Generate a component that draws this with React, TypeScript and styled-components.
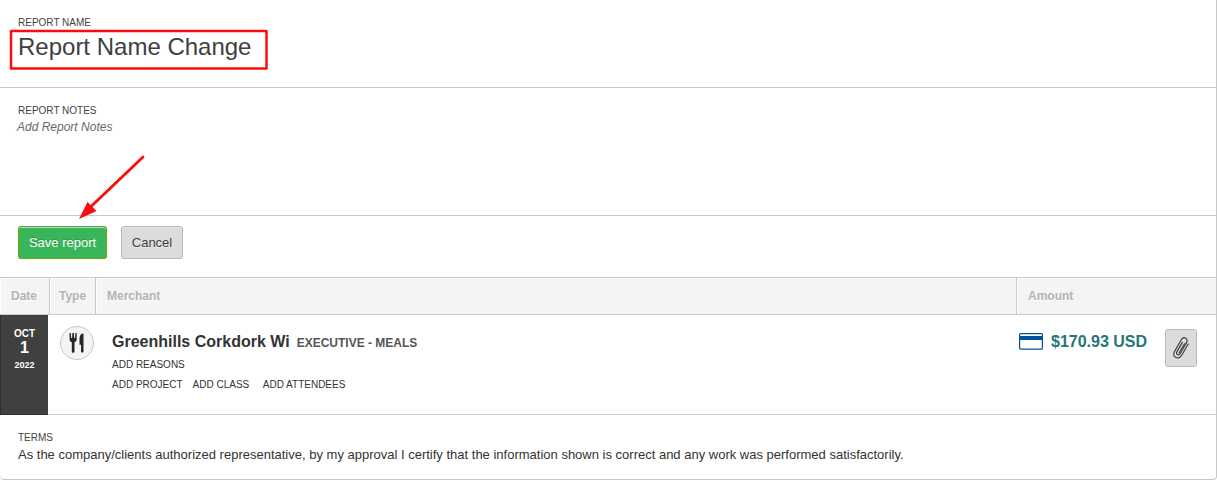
import React from "react";
import styled, { createGlobalStyle } from "styled-components";

const GlobalStyle = createGlobalStyle`
  *, *::before, *::after { box-sizing: border-box; }
  body {
    margin: 0;
    background: #fff;
    color: #333;
    font-family: "Liberation Sans", Arial, Helvetica, sans-serif;
  }
`;

const Report = styled.main`
  position: relative;
  height: 480px;
  border: 1px solid #c8c8c8;
  border-top: 0;
  border-left: 0;
  border-radius: 0 0 4px 4px;
  overflow: hidden;
  white-space: nowrap;
`;

const Section = styled.section<{ $height: number; $top: number }>`
  height: ${(p) => p.$height}px;
  padding: ${(p) => p.$top}px 18px 0;
  border-bottom: 1px solid #c8c8c8;
`;

const Label = styled.div`
  font-size: 10px;
  line-height: 12px;
  color: #444;
`;

const ReportName = styled.h1`
  margin: 4px 0 0;
  font-size: 24px;
  font-weight: 400;
  line-height: 28px;
  color: #404040;
`;

const NotesPlaceholder = styled.div`
  margin: 3px 0 0 -1px;
  font-size: 12px;
  font-style: italic;
  line-height: 14px;
  color: #6a6a6a;
`;

const Actions = styled.div`
  display: flex;
  gap: 14px;
  height: 62px;
  padding: 10px 18px 0;
  border-bottom: 1px solid #c8c8c8;
`;

const Button = styled.button<{ $primary?: boolean }>`
  width: ${(p) => (p.$primary ? 89 : 62)}px;
  height: 33px;
  padding: 1px 0 0;
  border: 1px solid ${(p) => (p.$primary ? "#77a80a" : "#b8b8b8")};
  border-top-color: ${(p) => (p.$primary ? "#4aa848" : "#b8b8b8")};
  border-radius: 3px;
  background: ${(p) => (p.$primary ? "#39b55a" : "#dcdcdc")};
  box-shadow: inset 0 1px 0 ${(p) => (p.$primary ? "#b0e0bd" : "#e4e4e4")};
  color: ${(p) => (p.$primary ? "#fff" : "#404040")};
  font: 13px/16px "Liberation Sans", Arial, sans-serif;
  text-shadow: ${(p) => (p.$primary ? "0 -1px 0 rgba(0,0,0,.2)" : "0 1px 0 rgba(255,255,255,.4)")};
`;

const columns = "50px 46px 1fr 199px";

const TableHead = styled.div`
  display: grid;
  grid-template-columns: ${columns};
  height: 37px;
  border-bottom: 1px solid #c8c8c8;
`;

const HeadCell = styled.div<{ $inset: number }>`
  padding: 11px 0 0 ${(p) => p.$inset}px;
  border-right: 1px solid #c8c8c8;
  background: #f4f4f4;
  box-shadow: inset 1px 1px 0 #fff;
  color: #b3b3b3;
  font-size: 12px;
  font-weight: 700;
  line-height: 14px;
  text-shadow: 0 1px 0 #fff;
  &:last-child { border-right: 0; }
`;

const ExpenseRow = styled.div`
  display: flex;
  height: 100px;
  border-bottom: 1px solid #c8c8c8;
`;

const DateCell = styled.div`
  display: flex;
  flex-direction: column;
  align-items: center;
  width: 48px;
  height: 100px;
  padding-top: 13px;
  background: #404040;
  border-left: 1px solid #303030;
  border-bottom: 1px solid #303030;
  color: #fff;
  font-weight: 700;
`;

const Month = styled.span`
  font-size: 10px;
  line-height: 12px;
`;

const Day = styled.span`
  font-size: 16px;
  line-height: 16px;
`;

const Year = styled.span`
  margin-top: 4px;
  font-size: 9px;
  line-height: 10px;
`;

const TypeBadge = styled.div`
  display: flex;
  align-items: center;
  justify-content: center;
  width: 34px;
  height: 34px;
  margin: 11px 18px 0 12px;
  border: 1px solid #c8c8c8;
  border-radius: 50%;
  background: #f4f4f4;
`;

const Details = styled.div`
  flex: 1;
  padding-top: 18px;
`;

const MerchantLine = styled.div`
  display: flex;
  align-items: baseline;
  gap: 7px;
  height: 20px;
  line-height: 18px;
`;

const Merchant = styled.strong`
  font-size: 16px;
  color: #333;
`;

const Category = styled.strong`
  font-size: 12px;
  color: #555;
`;

const LinkRow = styled.div<{ $top: number }>`
  display: flex;
  margin-top: ${(p) => p.$top}px;
  font-size: 10px;
  line-height: 12px;
  color: #333;
`;

const AddLink = styled.span<{ $gap?: number }>`
  margin-right: ${(p) => p.$gap ?? 0}px;
`;

const AmountCell = styled.div`
  display: flex;
  width: 197px;
`;

const CardIcon = styled.svg`
  display: block;
  width: 24px;
  height: 17px;
  margin-top: 18px;
`;

const Amount = styled.strong`
  width: 96px;
  margin: 18px 18px 0 8px;
  font-size: 16px;
  line-height: 18px;
  color: #267579;
`;

const AttachButton = styled.button`
  display: flex;
  align-items: center;
  justify-content: center;
  width: 32px;
  height: 38px;
  margin-top: 14px;
  padding: 0;
  border: 1px solid #b8b8b8;
  border-radius: 3px;
  background: #dcdcdc;
`;

const Terms = styled.footer`
  padding: 17px 18px 0;
`;

const TermsText = styled.div`
  margin-top: 3px;
  font-size: 13px;
  line-height: 16px;
`;

const Annotation = styled.svg`
  position: absolute;
  top: 0;
  left: 0;
  pointer-events: none;
`;

export default function App() {
  return (
    <>
      <GlobalStyle />
      <Report>
        <Section $height={88} $top={17}>
          <Label>REPORT NAME</Label>
          <ReportName>Report Name Change</ReportName>
        </Section>
        <Section $height={128} $top={17}>
          <Label>REPORT NOTES</Label>
          <NotesPlaceholder>Add Report Notes</NotesPlaceholder>
        </Section>
        <Actions>
          <Button $primary>Save report</Button>
          <Button>Cancel</Button>
        </Actions>
        <TableHead>
          <HeadCell $inset={11}>Date</HeadCell>
          <HeadCell $inset={9}>Type</HeadCell>
          <HeadCell $inset={11}>Merchant</HeadCell>
          <HeadCell $inset={11}>Amount</HeadCell>
        </TableHead>
        <ExpenseRow>
          <DateCell>
            <Month>OCT</Month>
            <Day>1</Day>
            <Year>2022</Year>
          </DateCell>
          <TypeBadge>
            <svg width="16" height="20" viewBox="0 0 16 20" fill="#262626">
              <path d="M.6 0h1.300l.3 5h.9l.3-5h1.500l.3 5h.9l.3-5h1.300v6.200c0 1.700-.9 2.600-2.200 3v9.300c0 1.700-2.700 1.700-2.700 0V9.200C1.400 8.800.6 7.900.6 6.200z" />
              <path d="M14.500.4v18.100c0 1.500-2.500 1.500-2.500 0v-6.700h-1.500V5.500c0-3.300 1.600-5.100 4-5.100z" />
            </svg>
          </TypeBadge>
          <Details>
            <MerchantLine>
              <Merchant>Greenhills Corkdork Wi</Merchant>
              <Category>EXECUTIVE - MEALS</Category>
            </MerchantLine>
            <LinkRow $top={6}>
              <AddLink>ADD REASONS</AddLink>
            </LinkRow>
            <LinkRow $top={8}>
              <AddLink $gap={10}>ADD PROJECT</AddLink>
              <AddLink $gap={13.5}>ADD CLASS</AddLink>
              <AddLink>ADD ATTENDEES</AddLink>
            </LinkRow>
          </Details>
          <AmountCell>
            <CardIcon viewBox="0 0 24 17">
              <rect x=".6" y=".6" width="22.800" height="15.600" rx="1" fill="#fff" stroke="#00539b" strokeWidth="1.200" />
              <path d="M1 3h22v4H1z" fill="#00539b" />
            </CardIcon>
            <Amount>$170.93 USD</Amount>
            <AttachButton aria-label="Attach receipt">
              <svg width="16" height="22" viewBox="0 0 16 22" fill="none" stroke="#404040" strokeWidth="1.200" strokeLinecap="round">
                <path d="M15.200 7 9 17.700C7.100 20.900 4.600 21.500 2.500 20.300S.2 16.700 1.900 13.800L8.300 2.800C9.500.8 11.300.4 12.700 1.200s1.900 2.500.8 4.400L7.400 16.200c-.9 1.600-2.100 1.900-3 1.400s-1.200-1.700-.3-3.200L9.300 5.400" />
                <path d="M11.500 6.800 6.200 15.800" />
              </svg>
            </AttachButton>
          </AmountCell>
        </ExpenseRow>
        <Terms>
          <Label>TERMS</Label>
          <TermsText>
            As the company/clients authorized representative, by my approval I certify that the information shown is correct and any work was performed satisfactorily.
          </TermsText>
        </Terms>
        <Annotation width="280" height="230" viewBox="0 0 280 230">
          <rect x="11" y="31" width="255.500" height="37.500" fill="none" stroke="#fb0d0d" strokeWidth="2.500" strokeLinejoin="round" />
          <path d="M143 157 90 207.500" stroke="#fb0d0d" strokeWidth="2.800" strokeLinecap="round" />
          <path d="M79 219 87.500 202 96.500 211z" fill="#fb0d0d" />
        </Annotation>
      </Report>
    </>
  );
}
